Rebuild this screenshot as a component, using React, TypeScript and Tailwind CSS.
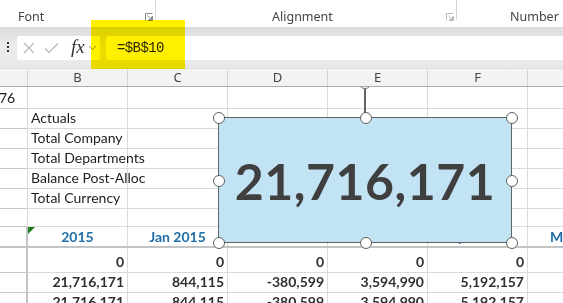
import React from "react";

const GRID = "grid grid-cols-[28px_100px_100px_100px_100px_100px_100px]";
const CELL_FONT = "font-['Lato','Liberation_Sans',sans-serif]";

function Launcher() {
  return (
    <svg width="8" height="8" viewBox="0 0 8 8" className="block">
      <path d="M0.5 7.5V0.5H7.5" fill="none" stroke="#8a8a8a" strokeWidth="1" />
      <path d="M2.5 2.5L6.5 6.5M3.5 6.5H6.5V3.5" fill="none" stroke="#8a8a8a" strokeWidth="1" />
      <path d="M7.5 3V7.5H3" fill="none" stroke="#8a8a8a" strokeWidth="1" />
    </svg>
  );
}

function Cell({
  children,
  align = "left",
  className = "",
  valign = "items-center",
}: {
  children?: React.ReactNode;
  align?: "left" | "right" | "center";
  className?: string;
  valign?: string;
}) {
  const a =
    align === "right"
      ? "justify-end pr-[3px]"
      : align === "center"
      ? "justify-center"
      : "justify-start pl-[3px]";
  return (
    <div
      className={`relative flex ${valign} ${a} border-r border-b border-[#dadada] whitespace-nowrap overflow-visible ${className}`}
    >
      {children}
    </div>
  );
}

function LabelRow({ label, first }: { label?: string; first?: string }) {
  return (
    <div className={`${GRID} h-[20px] text-[14px] text-[#1e1e1e] ${CELL_FONT}`}>
      <Cell className="pl-0 border-b-[#c8c8c8]">{first && <span className="-ml-[4px]">{first}</span>}</Cell>
      <Cell className="z-10">{label}</Cell>
      <Cell />
      <Cell />
      <Cell />
      <Cell />
      <Cell />
    </div>
  );
}

function NumRow({ vals }: { vals: string[] }) {
  return (
    <div className={`${GRID} h-[20px] text-[14px] font-bold text-[#303030] ${CELL_FONT}`}>
      <Cell className="border-b-[#c8c8c8] border-r-2 border-r-[#c4c4c4]" />
      {vals.map((v, i) => (
        <Cell key={i} align="right" className="pt-[3px]">
          {v}
        </Cell>
      ))}
      <Cell />
    </div>
  );
}

export default function App() {
  const headers = ["B", "C", "D", "E", "F", ""];
  return (
    <div className="relative w-[563px] h-[303px] overflow-hidden bg-white">
      {/* Ribbon group labels */}
      <div className="flex h-[27px] bg-white text-[12.5px] text-[#444] font-['Noto_Sans','Open_Sans',sans-serif]">
        <div className="relative w-[156px] border-r border-[#d6d6d6] h-[20px]">
          <span className="absolute left-[18px] top-[8px]">Font</span>
          <span className="absolute left-[145px] top-[13px]">
            <Launcher />
          </span>
        </div>
        <div className="relative w-[301px] border-r border-[#d6d6d6] h-[20px]">
          <span className="absolute left-[116px] top-[8px]">Alignment</span>
          <span className="absolute left-[290px] top-[13px] opacity-60">
            <Launcher />
          </span>
        </div>
        <div className="relative flex-1">
          <span className="absolute left-[53px] top-[8px]">Number</span>
        </div>
      </div>

      {/* Formula bar area */}
      <div className="h-[41px] bg-gradient-to-b from-[#dcdcdc] via-[#ececec] to-[#e8e8e8] flex items-start pt-[9px]">
        <div className="w-[16px] flex justify-center pt-[6px]">
          <div className="flex flex-col gap-[2px]">
            <span className="w-[2px] h-[2px] bg-[#333]" />
            <span className="w-[2px] h-[2px] bg-[#333]" />
            <span className="w-[2px] h-[2px] bg-[#333]" />
          </div>
        </div>
        <div className="ml-[1px] w-[83px] h-[24px] bg-white rounded-[3px] flex items-center">
          <svg width="14" height="14" viewBox="0 0 14 14" className="ml-[5px]">
            <path d="M2 2L12 12M12 2L2 12" stroke="#b4b4b4" strokeWidth="1.1" fill="none" />
          </svg>
          <svg width="15" height="12" viewBox="0 0 15 12" className="ml-[8px]">
            <path d="M1 6.5L5 10.5L14 1.5" stroke="#b4b4b4" strokeWidth="1.1" fill="none" />
          </svg>
          <span className="ml-[12px] text-[19px] italic text-[#333] font-['Liberation_Serif',serif] leading-none -mt-[3px]">
            fx
          </span>
          <svg width="9" height="6" viewBox="0 0 9 6" className="ml-[3px]">
            <path d="M1 1L4.5 4.5L8 1" stroke="#9a9a9a" strokeWidth="1" fill="none" />
          </svg>
        </div>
        <div className="ml-[6px] flex-1 h-[24px] bg-white rounded-l-[3px] flex items-center pl-[11px] text-[14px] tracking-[-0.6px] text-[#2a2a2a] font-['Liberation_Mono',monospace]">
          =$B$10
        </div>
      </div>

      {/* Column headers */}
      <div className={`${GRID} relative z-50 h-[19px] bg-[#f3f3f3] border-t border-[#dedede] border-b border-b-[#ababab] text-[13px] text-[#444] font-['Noto_Sans','Open_Sans',sans-serif]`}>
        <div className="border-r border-[#d4d4d4]" />
        {headers.map((h, i) => (
          <div key={i} className="flex items-center justify-center border-r border-[#d4d4d4] leading-none">
            {h}
          </div>
        ))}
      </div>

      {/* Grid body */}
      <div className="relative overflow-hidden h-[216px]">
        <LabelRow first="76" />
        <LabelRow label="Actuals" />
        <LabelRow label="Total Company" />
        <LabelRow label="Total Departments" />
        <LabelRow label="Balance Post-Alloc" />
        <LabelRow label="Total Currency" />
        <LabelRow />
        <div className={`${GRID} h-[21px] text-[14px] font-bold text-[#1f6ea8] ${CELL_FONT} border-b-2 border-[#c4c4c4]`}>
          <Cell className="border-r-2 border-r-[#c4c4c4] border-b-0" />
          {["2015", "Jan 2015", "Feb 2015", "Mar 2015", "Apr 2015", "May 2015"].map((t, i) => (
            <Cell key={i} align="center" valign="items-start" className="border-b-0">
              {i === 0 && (
                <span className="absolute left-0 top-0 w-0 h-0 border-t-[7px] border-t-[#1a7f1a] border-r-[7px] border-r-transparent" />
              )}
              <span className={`block leading-[14px] mt-[3px] ${i === 5 ? "ml-[8px]" : ""}`}>{t}</span>
            </Cell>
          ))}
        </div>
        <NumRow vals={["0", "0", "0", "0", "0"]} />
        <NumRow vals={["21,716,171", "844,115", "-380,599", "3,594,990", "5,192,157"]} />
        <NumRow vals={["21,716,171", "844,115", "-380,599", "3,594,990", "5,192,157"]} />

        {/* Shape overlay */}
        <div className="absolute left-[218px] top-[30px] w-[294px] h-[126px] bg-[#c2e3f3] border-[1.5px] border-[#626262] flex items-center justify-center z-20">
          <span className="text-[50px] font-bold text-[#3f3f3f] font-['Lato','Liberation_Sans',sans-serif] leading-none tracking-[0.5px] mt-[1px]">
            21,716,171
          </span>
        </div>
        {/* rotation handle */}
        <div className="absolute left-[364px] top-[2px] w-[1.5px] h-[28px] bg-[#626262] z-20" />
        <div className="absolute left-[358px] top-[-12px] w-[14px] h-[14px] rounded-full border-[1.5px] border-[#707070] bg-white z-20" />
        {/* handles */}
        {[
          [218, 30],
          [365, 30],
          [511, 30],
          [218, 93],
          [511, 93],
          [218, 155],
          [365, 155],
          [511, 155],
        ].map(([x, y], i) => (
          <div
            key={i}
            style={{ left: x - 5.5, top: y - 5.5 }}
            className="absolute w-[12px] h-[12px] rounded-full bg-white border-[1.5px] border-[#606060] z-30"
          />
        ))}
      </div>

      {/* Yellow highlighter */}
      <div className="absolute left-[91px] top-[20px] w-[94px] h-[49px] bg-[#fff000] mix-blend-multiply z-[60]" />
    </div>
  );
}
